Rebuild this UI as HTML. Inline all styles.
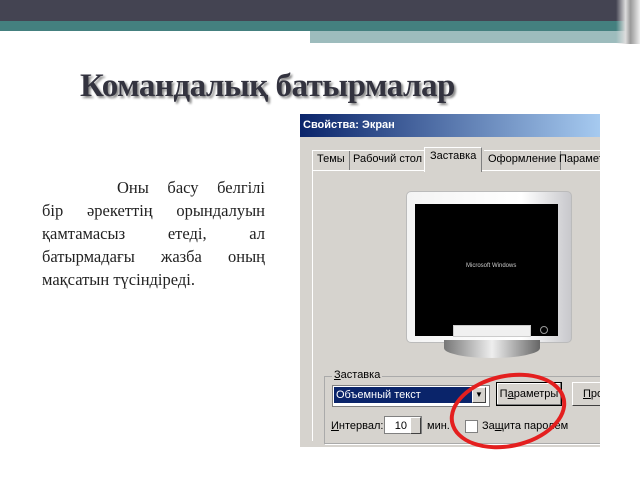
<!DOCTYPE html><html><head><meta charset="utf-8"><style>
body{margin:0;width:640px;height:480px;background:#fff;position:relative;overflow:hidden;font-family:"Liberation Sans",sans-serif}
.a{position:absolute}
.t{font-size:11px;color:#000;white-space:nowrap}
.p div{text-align:justify;text-align-last:justify;height:23px}
</style></head><body>
<div class="a" style="left:0;top:0;width:640px;height:21px;background:#444452"></div>
<div class="a" style="left:0;top:21px;width:640px;height:10px;background:#44807f"></div>
<div class="a" style="left:310px;top:31px;width:330px;height:12px;background:#9dbcbd"></div>
<div class="a" style="left:616px;top:0;width:24px;height:44px;background:linear-gradient(90deg,rgba(255,255,255,0),#ddd 40%,#999 60%,#eee)"></div>
<div class="a" style="left:80px;top:68px;font-family:'Liberation Serif',serif;font-weight:bold;font-size:33px;color:#33333f;text-shadow:2px 2px 2px #888;letter-spacing:-0.5px">Командалық батырмалар</div>
<div class="a p" style="left:42px;top:176px;width:223px;font-family:'Liberation Serif',serif;font-size:16.5px;line-height:23px;color:#222">
<div style="padding-left:75px">Оны басу белгілі</div>
<div>бір әрекеттің орындалуын</div>
<div>қамтамасыз етеді, ал</div>
<div>батырмадағы жазба оның</div>
<div style="text-align-last:left">мақсатын түсіндіреді.</div>
</div>
<div class="a" style="left:300px;top:114px;width:300px;height:333px;background:#d6d3ce;overflow:hidden">
 <div class="a" style="left:0;top:0;width:300px;height:23px;background:linear-gradient(90deg,#0a246a,#a6caf0)"></div>
 <div class="a t" style="left:3px;top:5px;color:#fff;font-weight:bold">Свойства: Экран</div>
 <div class="a" style="left:12px;top:56px;width:300px;height:270px;border-left:1px solid #fff;border-top:1px solid #fff"></div>
 <div class="a t" style="left:12px;top:36px;border:1px solid #fff;border-bottom:none;border-right:1px solid #808080;padding:2px 4px;height:15px">Темы</div>
 <div class="a t" style="left:49px;top:36px;border-top:1px solid #fff;border-right:1px solid #808080;padding:2px 4px;height:15px">Рабочий стол</div>
 <div class="a t" style="left:124px;top:33px;border:1px solid #fff;border-right:1px solid #808080;border-bottom:none;background:#d6d3ce;padding:2px 5px;height:20px">Заставка</div>
 <div class="a t" style="left:184px;top:36px;border-top:1px solid #fff;border-right:1px solid #808080;padding:2px 4px;height:15px">Оформление</div>
 <div class="a t" style="left:255px;top:36px;border-top:1px solid #fff;padding:2px 4px;height:15px">Параметры</div>
 <div class="a" style="left:106px;top:77px;width:164px;height:150px;background:linear-gradient(90deg,#f4f4f4,#fff 70%,#c8c8cc);border-radius:5px;border:1px solid #bbb"></div>
 <div class="a" style="left:115px;top:90px;width:143px;height:132px;background:#000"></div>
 <div class="a" style="left:166px;top:149px;font-size:6px;color:#ccc">Microsoft Windows</div>
 <div class="a" style="left:153px;top:211px;width:76px;height:10px;border:1px solid #ccc;background:#f0f0f0"></div>
 <div class="a" style="left:240px;top:212px;width:6px;height:6px;border:1px solid #999;border-radius:50%"></div>
 <div class="a" style="left:144px;top:226px;width:96px;height:18px;border-radius:0 0 48px 48px/0 0 10px 10px;background:linear-gradient(90deg,#777,#eee 50%,#666)"></div>
 <div class="a" style="left:24px;top:262px;width:290px;height:66px;border:1px solid #aaa;box-shadow:1px 1px 0 #fff"></div>
 <div class="a t" style="left:32px;top:255px;background:#d6d3ce;padding:0 2px"><u>З</u>аставка</div>
 <div class="a" style="left:32px;top:271px;width:156px;height:20px;background:#fff;border:1px solid #808080"></div>
 <div class="a t" style="left:34px;top:273px;width:136px;height:16px;background:#0a246a;color:#fff;line-height:16px;padding-left:2px">Объемный текст</div>
 <div class="a" style="left:172px;top:273px;width:14px;height:16px;background:#d6d3ce;border:1px solid #fff;border-right-color:#404040;border-bottom-color:#404040;box-sizing:border-box;font-size:8px;text-align:center;line-height:14px">▼</div>
 <div class="a t" style="left:196px;top:268px;width:66px;height:24px;border:1px solid #000;box-shadow:inset -1px -1px #808080,inset 1px 1px #fff;box-sizing:border-box;text-align:center;line-height:22px">П<u>а</u>раметры</div>
 <div class="a t" style="left:272px;top:268px;width:40px;height:24px;border:1px solid #fff;border-right-color:#404040;border-bottom-color:#404040;box-sizing:border-box;line-height:22px;padding-left:10px"><u>П</u>ро</div>
 <div class="a t" style="left:31px;top:306px"><u>И</u>нтервал:</div>
 <div class="a t" style="left:84px;top:302px;width:38px;height:18px;background:#fff;border:1px solid #808080;text-align:right;line-height:18px;padding-right:14px;box-sizing:border-box">10</div>
 <div class="a" style="left:110px;top:303px;width:11px;height:17px;background:#d6d3ce;border:1px solid #fff;border-right-color:#404040;border-bottom-color:#404040;box-sizing:border-box"></div>
 <div class="a t" style="left:127px;top:306px">мин.</div>
 <div class="a" style="left:165px;top:306px;width:11px;height:11px;background:#fff;border:1px solid #808080"></div>
 <div class="a t" style="left:182px;top:306px">За<u>щ</u>ита паролем</div>
</div>
<div class="a" style="left:449px;top:374px;width:110px;height:66px;border:4px solid #e41f1f;border-radius:50%;transform:rotate(-12deg)"></div>
</body></html>
